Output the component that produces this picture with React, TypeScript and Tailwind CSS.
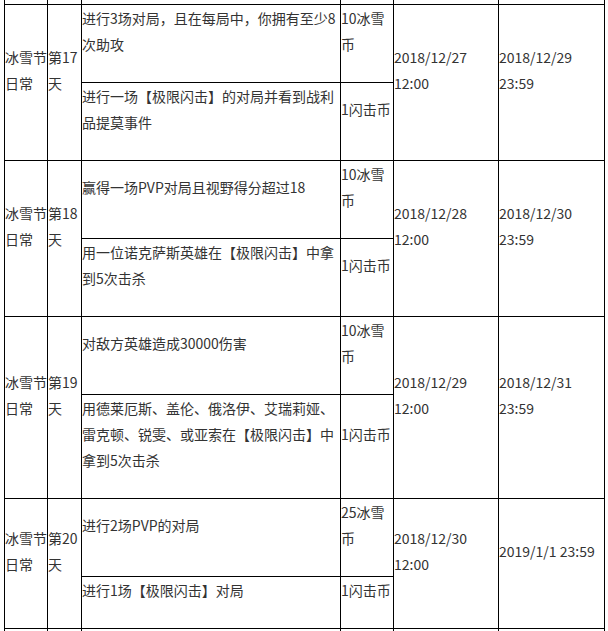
import React from "react";

interface Task {
  text: string;
  reward: string;
}

interface DayRow {
  day: string;
  tasks: Task[];
  start: string;
  end: string;
}

const ROWS: DayRow[] = [
  {
    day: "第17天",
    tasks: [
      { text: "进行3场对局，且在每局中，你拥有至少8次助攻", reward: "10冰雪币" },
      { text: "进行一场【极限闪击】的对局并看到战利品提莫事件", reward: "1闪击币" },
    ],
    start: "2018/12/27 12:00",
    end: "2018/12/29 23:59",
  },
  {
    day: "第18天",
    tasks: [
      { text: "赢得一场PVP对局且视野得分超过18", reward: "10冰雪币" },
      { text: "用一位诺克萨斯英雄在【极限闪击】中拿到5次击杀", reward: "1闪击币" },
    ],
    start: "2018/12/28 12:00",
    end: "2018/12/30 23:59",
  },
  {
    day: "第19天",
    tasks: [
      { text: "对敌方英雄造成30000伤害", reward: "10冰雪币" },
      {
        text: "用德莱厄斯、盖伦、俄洛伊、艾瑞莉娅、雷克顿、锐雯、或亚索在【极限闪击】中拿到5次击杀",
        reward: "1闪击币",
      },
    ],
    start: "2018/12/29 12:00",
    end: "2018/12/31 23:59",
  },
  {
    day: "第20天",
    tasks: [
      { text: "进行2场PVP的对局", reward: "25冰雪币" },
      { text: "进行1场【极限闪击】对局", reward: "1闪击币" },
    ],
    start: "2018/12/30 12:00",
    end: "2019/1/1 23:59",
  },
];

// every cell carries an empty line under its text, like the source page
const cell = "border border-black p-0 pb-[25px] align-middle text-left font-normal";

export default function App() {
  return (
    <div className="w-[608px] h-[631px] overflow-hidden bg-white">
      <table
        className="ml-[4px] w-[600px] table-fixed border-collapse text-[14px] leading-[26px] text-[#333]"
        style={{ fontFamily: '"Noto Sans CJK SC", "Noto Sans", sans-serif' }}
      >
        <colgroup>
          <col className="w-[43px]" />
          <col className="w-[34px]" />
          <col className="w-[259px]" />
          <col className="w-[53px]" />
          <col className="w-[105px]" />
          <col className="w-[106px]" />
        </colgroup>
        <tbody>
          {/* tail of the row above, cut off by the crop */}
          <tr className="h-[4px]">
            {[0, 1, 2, 3, 4, 5].map((i) => (
              <td key={i} className="border border-black border-t-0 p-0" />
            ))}
          </tr>
          {ROWS.map((row) =>
            row.tasks.map((task, i) => (
              <tr key={row.day + i}>
                {i === 0 && (
                  <>
                    <td rowSpan={2} className={cell}>冰雪节日常</td>
                    <td rowSpan={2} className={cell}>{row.day}</td>
                  </>
                )}
                <td className={cell}>{task.text}</td>
                <td className={cell}>{task.reward}</td>
                {i === 0 && (
                  <>
                    <td rowSpan={2} className={cell}>{row.start}</td>
                    <td rowSpan={2} className={cell}>{row.end}</td>
                  </>
                )}
              </tr>
            ))
          )}
          <tr className="h-[20px]">
            {[0, 1, 2, 3, 4, 5].map((i) => (
              <td key={i} className="border border-black border-b-0 p-0" />
            ))}
          </tr>
        </tbody>
      </table>
    </div>
  );
}
